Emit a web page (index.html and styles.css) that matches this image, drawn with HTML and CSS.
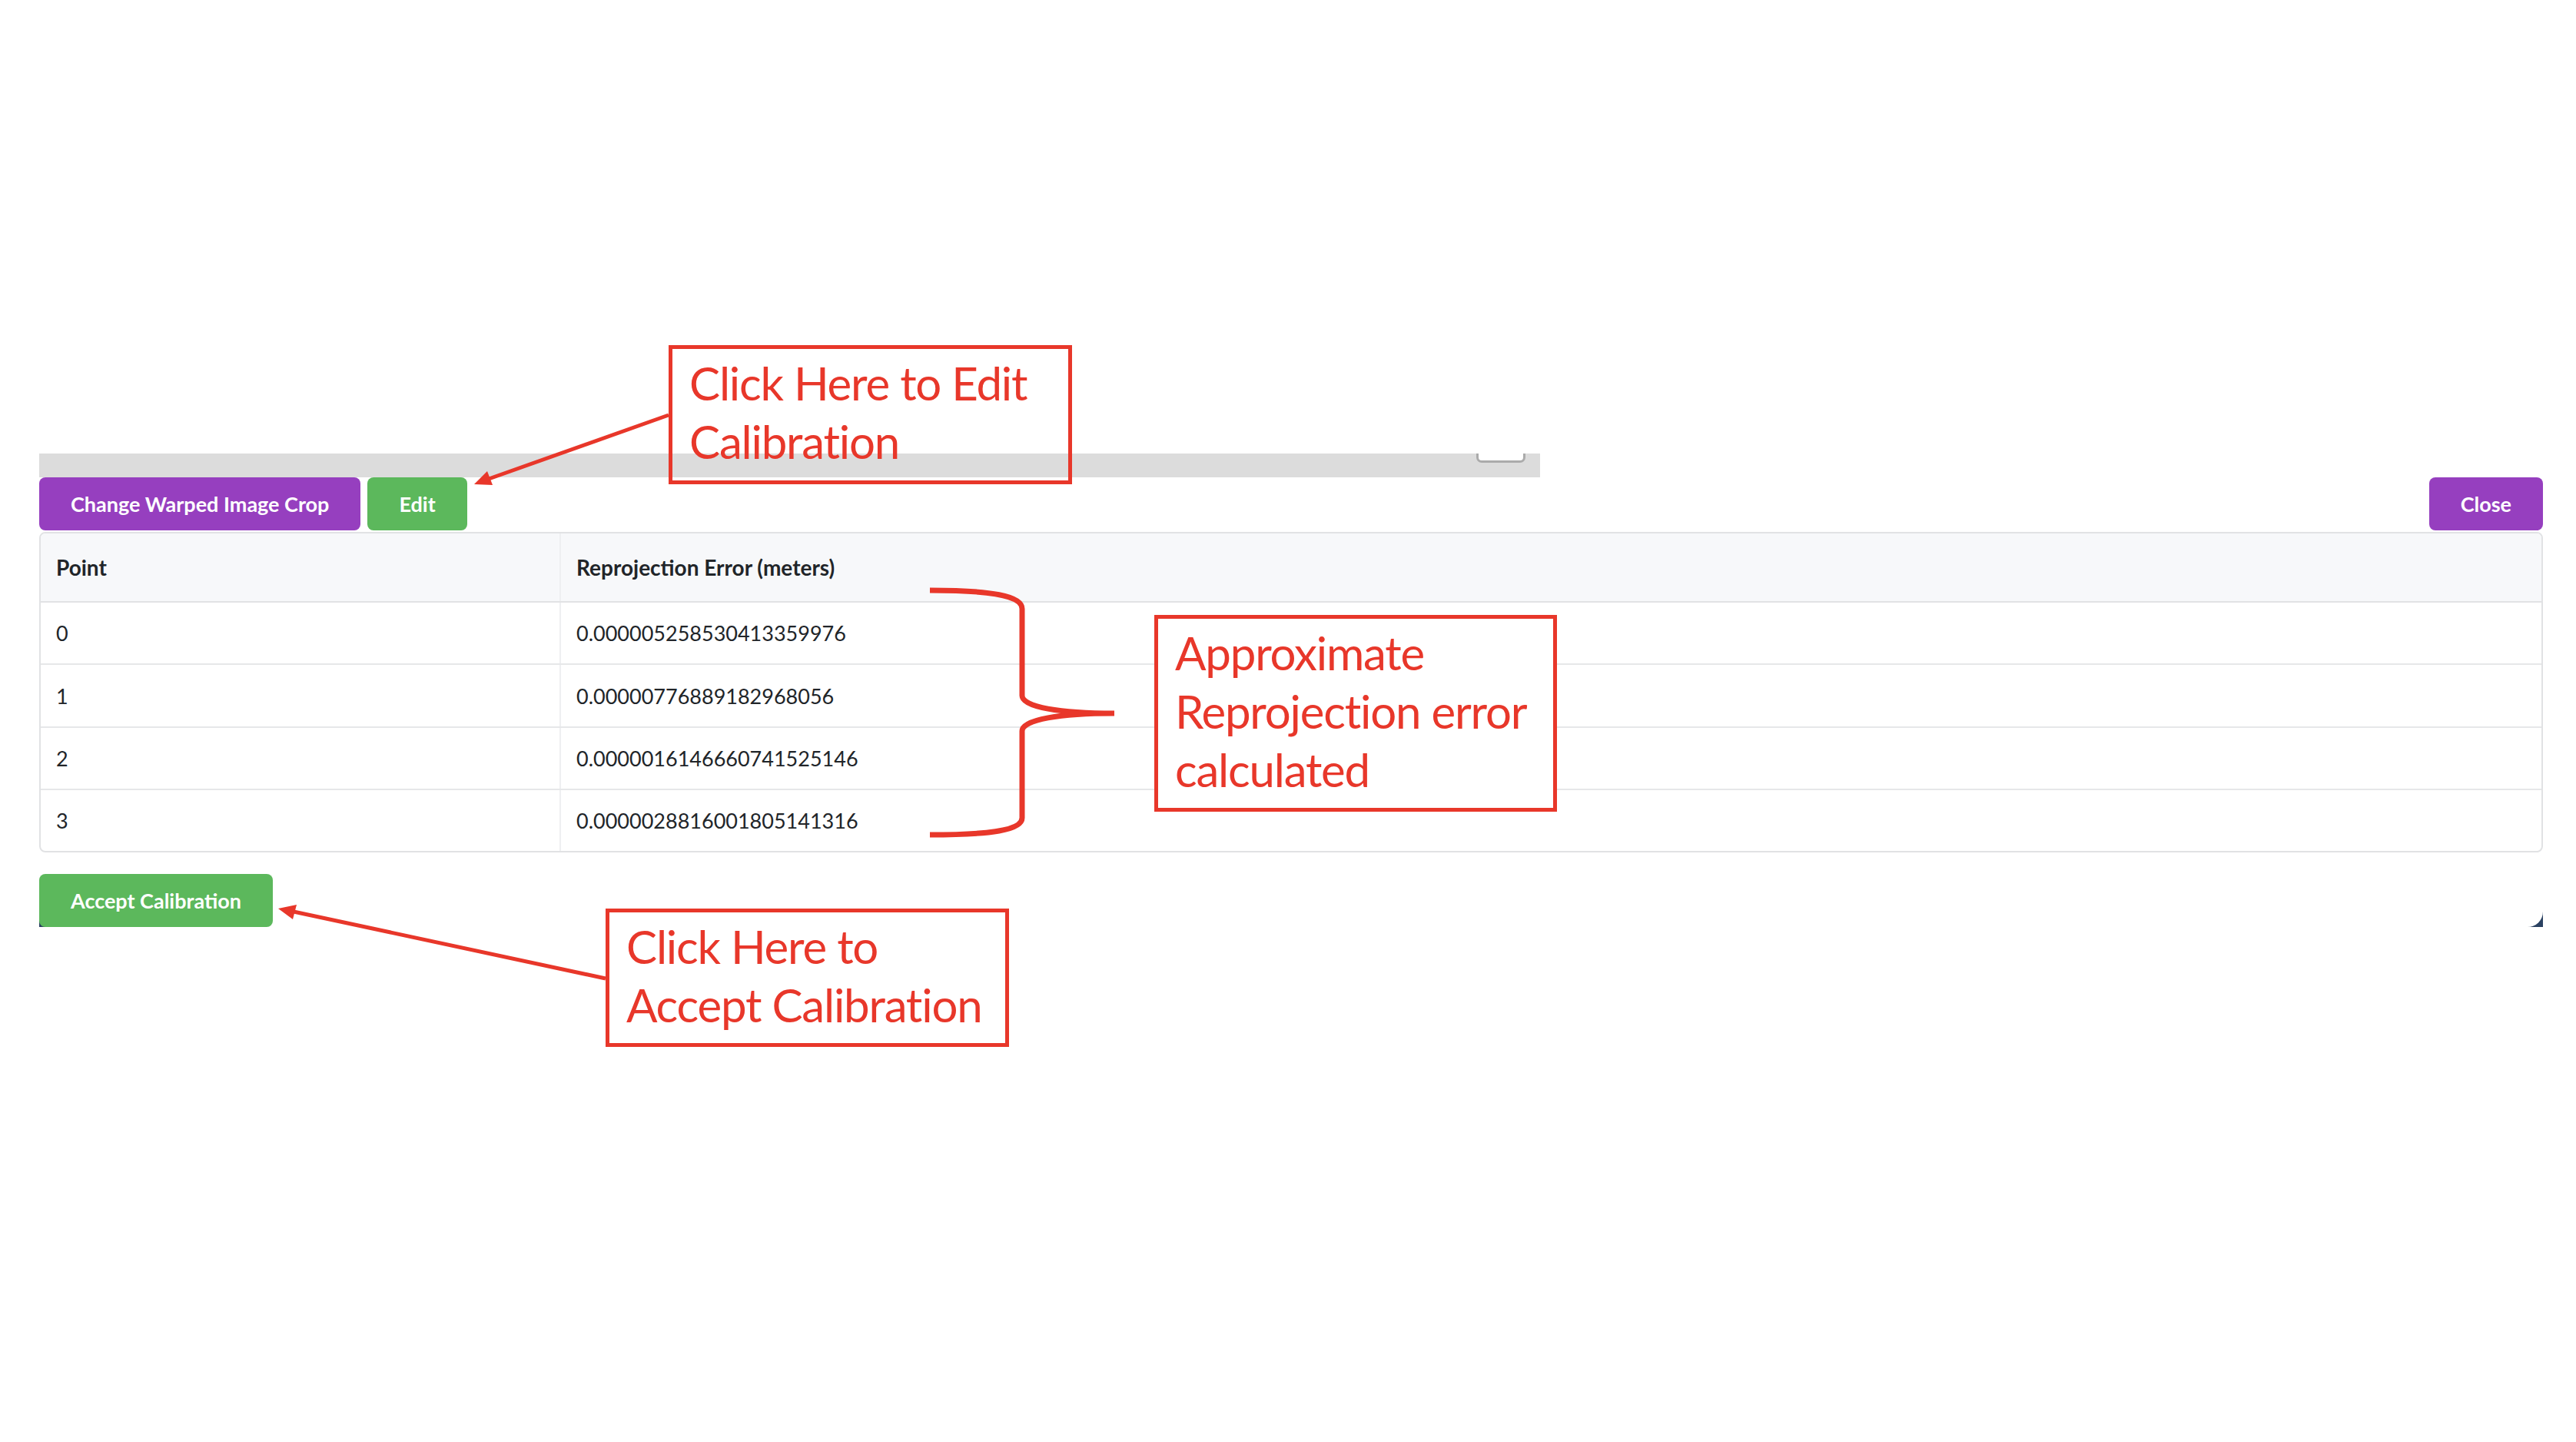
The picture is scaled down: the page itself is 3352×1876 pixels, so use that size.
FILE: index.html
```html
<!DOCTYPE html>
<html lang="en">
<head>
<meta charset="utf-8">
<title>Calibration</title>
<link rel="stylesheet" href="styles.css">
</head>
<body>
<div class="page">
  <div class="stage">
    <div class="panel">
      <div class="track"><span class="handle"></span></div>
      <div class="toolbar">
        <div class="group">
          <button class="btn btn-purple">Change Warped Image Crop</button>
          <button class="btn btn-green">Edit</button>
        </div>
        <button class="btn btn-purple">Close</button>
      </div>
      <div class="table-wrap">
        <table class="errors">
          <thead>
            <tr><th class="col-point">Point</th><th>Reprojection Error (meters)</th></tr>
          </thead>
          <tbody>
            <tr><td class="col-point">0</td><td>0.000005258530413359976</td></tr>
            <tr><td class="col-point">1</td><td>0.00000776889182968056</td></tr>
            <tr><td class="col-point">2</td><td>0.0000016146660741525146</td></tr>
            <tr><td class="col-point">3</td><td>0.0000028816001805141316</td></tr>
          </tbody>
        </table>
      </div>
      <div class="footer">
        <button class="btn btn-green">Accept Calibration</button>
      </div>
    </div>
  </div>

  <svg class="marks" width="3352" height="1876" viewBox="0 0 3352 1876" xmlns="http://www.w3.org/2000/svg">
    <g fill="none" stroke="#e8372a" stroke-linecap="butt">
      <line x1="870" y1="540" x2="636" y2="623" stroke-width="5"/>
      <line x1="788" y1="1273" x2="382" y2="1186" stroke-width="5"/>
      <path d="M1210 768 C1290 768 1330 775 1330 792 L1330 905 C1330 920 1380 928 1450 928 C1380 928 1330 936 1330 951 L1330 1064 C1330 1080 1290 1086 1210 1086" stroke-width="7"/>
    </g>
    <g fill="#e8372a">
      <polygon points="617,630 641,631 634,613"/>
      <polygon points="362,1182 386,1177 381,1196"/>
    </g>
  </svg>

  <div class="note note-edit">Click Here to Edit<br>Calibration</div>
  <div class="note note-error">Approximate<br>Reprojection error<br>calculated</div>
  <div class="note note-accept">Click Here to<br>Accept Calibration</div>
</div>
</body>
</html>
```

FILE: styles.css
```css
* { box-sizing: border-box; }

html, body {
  margin: 0;
  padding: 0;
  background: #ffffff;
}

body {
  font-family: Lato, "Open Sans", sans-serif;
  color: #212529;
}

.page {
  position: relative;
  width: 3352px;
  height: 1876px;
  padding-top: 590px;
  padding-left: 51px;
}

.stage {
  width: 3258px;
  background: #2b4262;
}

.panel {
  background: #ffffff;
  border-radius: 0 0 20px 20px;
  display: flex;
  flex-direction: column;
}

.track {
  position: relative;
  width: 1953px;
  height: 31px;
  background: #dcdcdc;
}

.handle {
  position: absolute;
  left: 1870px;
  top: 0;
  width: 64px;
  height: 12px;
  background: #ffffff;
  border: 3px solid #ababab;
  border-top: none;
  border-radius: 0 0 7px 7px;
}

.toolbar {
  display: flex;
  justify-content: space-between;
  align-items: flex-start;
}

.group {
  display: flex;
  gap: 9px;
}

.btn {
  height: 69px;
  padding: 0 41px;
  border: none;
  border-radius: 8px;
  font-family: Lato, sans-serif;
  font-weight: 700;
  font-size: 27px;
  color: #ffffff;
  display: flex;
  align-items: center;
  justify-content: center;
  white-space: nowrap;
  cursor: pointer;
}

.btn-purple { background: #963fbf; }
.btn-green { background: #5cb85c; }

.table-wrap {
  margin-top: 2px;
  width: 3258px;
  border: 2px solid #e1e2e4;
  border-radius: 8px;
  overflow: hidden;
}

.errors {
  width: 100%;
  border-collapse: collapse;
  table-layout: fixed;
  font-size: 27px;
}

.errors th,
.errors td {
  text-align: left;
  padding: 0 20px;
  vertical-align: middle;
}

.errors th {
  height: 89px;
  background: #f7f8fa;
  font-weight: 700;
  font-size: 28px;
  border-bottom: 2px solid #e1e2e4;
}

.errors td {
  height: 81.4px;
  font-weight: 400;
  border-bottom: 2px solid #e6e7e9;
}

.errors tbody tr:last-child td { border-bottom: none; height: 79.4px; }

.errors .col-point {
  width: 676px;
  border-right: 2px solid #eeeff1;
}

.footer {
  margin-top: 28px;
  display: flex;
}

.marks {
  position: absolute;
  left: 0;
  top: 0;
  pointer-events: none;
}

.note {
  position: absolute;
  border: 5px solid #e8372a;
  color: #e8372a;
  font-family: Lato, sans-serif;
  font-size: 60px;
  letter-spacing: -1.2px;
  line-height: 76px;
  white-space: nowrap;
  padding: 6px 0 0 22px;
}

.note-edit {
  left: 870px;
  top: 449px;
  width: 525px;
  height: 181px;
}

.note-error {
  left: 1502px;
  top: 800px;
  width: 524px;
  height: 256px;
  background: #ffffff;
}

.note-accept {
  left: 788px;
  top: 1182px;
  width: 525px;
  height: 180px;
}
```
